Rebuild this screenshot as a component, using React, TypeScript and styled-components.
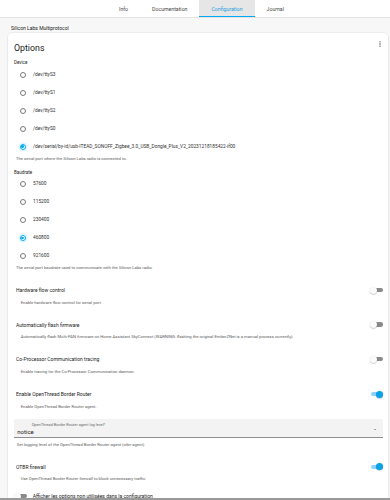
import React from "react";
import styled, { createGlobalStyle } from "styled-components";

const GlobalStyle = createGlobalStyle`
  html, body { margin: 0; padding: 0; background: #f7f7f7; }
  body {
    font-family: Roboto, "Noto Sans", "Liberation Sans", sans-serif;
    color: #212121;
  }
  * { box-sizing: border-box; }
`;

const Page = styled.div`
  width: 390px;
  height: 500px;
  overflow: hidden;
  display: flex;
  flex-direction: column;
  background: #f7f7f7;
`;

const TabBar = styled.nav`
  flex: none;
  height: 18px;
  background: #ffffff;
  border-bottom: 1px solid #e4e4e4;
  display: flex;
  padding-left: 107px;
`;

const Tab = styled.div<{ $active?: boolean }>`
  height: 17px;
  padding: 0 12px;
  display: flex;
  align-items: center;
  font-size: 5.2px;
  color: ${(p) => (p.$active ? "#1e9fe0" : "#4a4a4a")};
  background: ${(p) => (p.$active ? "#e6e6e6" : "transparent")};
  box-shadow: ${(p) => (p.$active ? "inset 0 -1px 0 #03a9f4" : "none")};
`;

const Content = styled.main`
  flex: 1;
  min-height: 0;
  overflow: hidden;
  padding: 7px 2px 0 8px;
  display: flex;
  flex-direction: column;
`;

const AddonName = styled.div`
  font-size: 5px;
  line-height: 6px;
  padding-left: 3px;
  margin-bottom: 2px;
  color: #212121;
`;

const Card = styled.section`
  background: #ffffff;
  border-radius: 4px 4px 0 0;
  box-shadow: 0 0 0 0.6px #e3e3e3, 0 1px 2px rgba(0, 0, 0, 0.06);
  padding: 10px 5px 0 6px;
  display: flex;
  flex-direction: column;
`;

const CardHeader = styled.header`
  display: flex;
  justify-content: space-between;
  align-items: flex-start;
`;

const CardTitle = styled.h1`
  margin: 0;
  font-size: 8.8px;
  line-height: 10px;
  font-weight: 400;
  color: #212121;
`;

const KebabButton = styled.div`
  margin-top: -2px;
  margin-right: 2px;
  width: 2px;
  height: 6px;
  display: flex;
`;

const GroupLabel = styled.div<{ $top: number }>`
  margin-top: ${(p) => p.$top}px;
  margin-bottom: 0.5px;
  font-size: 4.5px;
  line-height: 5px;
  color: #212121;
`;

const RadioList = styled.div`
  display: flex;
  flex-direction: column;
`;

const RadioRow = styled.label`
  height: 18px;
  display: flex;
  align-items: center;
  padding-left: 5.7px;
`;

const RadioCircle = styled.span<{ $checked?: boolean }>`
  flex: none;
  width: 6px;
  height: 6px;
  border-radius: 50%;
  border: 0.8px solid ${(p) => (p.$checked ? "#03a9f4" : "#7a7a7a")};
  display: flex;
  align-items: center;
  justify-content: center;
  box-shadow: ${(p) => (p.$checked ? "0 0 0 1.6px rgba(3,169,244,0.13)" : "none")};

  &::after {
    content: "";
    width: 2.6px;
    height: 2.6px;
    border-radius: 50%;
    background: ${(p) => (p.$checked ? "#03a9f4" : "transparent")};
  }
`;

const RadioText = styled.span`
  margin-left: 7.3px;
  font-size: 4.8px;
  line-height: 6px;
  color: #333333;
  white-space: nowrap;
`;

const Helper = styled.div<{ $indent: number; $top?: number }>`
  margin-top: ${(p) => p.$top ?? 0}px;
  padding-left: ${(p) => p.$indent}px;
  font-size: 4.2px;
  line-height: 5px;
  color: #5e5e5e;
  white-space: nowrap;
`;

const SwitchRow = styled.div<{ $top: number }>`
  margin-top: ${(p) => p.$top}px;
  height: 10px;
  display: flex;
  align-items: center;
  justify-content: space-between;
  padding-left: 2px;
`;

const SwitchLabel = styled.span`
  font-size: 5px;
  line-height: 6px;
  color: #212121;
`;

const Toggle = styled.span<{ $on?: boolean }>`
  position: relative;
  flex: none;
  width: 13px;
  height: 8px;
  display: block;

  &::before {
    content: "";
    position: absolute;
    left: 0.5px;
    right: 0;
    top: 1.8px;
    height: 4.4px;
    border-radius: 2.2px;
    background: ${(p) => (p.$on ? "#8dd3f7" : "#8a8a8a")};
  }

  &::after {
    content: "";
    position: absolute;
    top: 0.5px;
    left: ${(p) => (p.$on ? "6px" : "-0.5px")};
    width: 7px;
    height: 7px;
    border-radius: 50%;
    background: ${(p) => (p.$on ? "#0ba2ea" : "#fbfbfb")};
    box-shadow: 0 0.4px 1px rgba(0, 0, 0, 0.35);
  }
`;

const SelectField = styled.div`
  margin-top: 10px;
  height: 19.5px;
  background: #f3f3f3;
  border-radius: 1.5px 1.5px 0 0;
  border-bottom: 0.8px solid #8f8f8f;
  display: flex;
  align-items: flex-start;
  justify-content: space-between;
`;

const SelectBody = styled.div`
  display: flex;
  flex-direction: column;
  padding-top: 4px;
`;

const SelectLabel = styled.span`
  padding-left: 17.7px;
  font-size: 3.9px;
  line-height: 4px;
  color: #6a6a6a;
`;

const SelectValue = styled.span`
  margin-top: 1.5px;
  padding-left: 3.3px;
  font-size: 6px;
  line-height: 7px;
  color: #212121;
`;

const SelectArrow = styled.span`
  margin-top: 10px;
  margin-right: 7px;
  width: 0;
  height: 0;
  border-left: 1.3px solid transparent;
  border-right: 1.3px solid transparent;
  border-top: 1.4px solid #555;
`;

const UnusedRow = styled.div`
  margin-top: 11px;
  height: 8px;
  display: flex;
  align-items: center;
  gap: 5.7px;
`;

const BottomEdge = styled.div`
  flex: none;
  height: 2px;
  background: #9a9a9a;
`;

const devices = [
  "/dev/ttyS3",
  "/dev/ttyS1",
  "/dev/ttyS2",
  "/dev/ttyS0",
  "/dev/serial/by-id/usb-ITEAD_SONOFF_Zigbee_3.0_USB_Dongle_Plus_V2_20231218185422-if00",
];
const bauds = ["57600", "115200", "230400", "460800", "921600"];

const Kebab = () => (
  <KebabButton>
    <svg width="2" height="6" viewBox="0 0 2 6">
      <circle cx="1" cy="0.8" r="0.65" fill="#444" />
      <circle cx="1" cy="3" r="0.65" fill="#444" />
      <circle cx="1" cy="5.2" r="0.65" fill="#444" />
    </svg>
  </KebabButton>
);

const RadioGroup = ({ items, selected }: { items: string[]; selected: string }) => (
  <RadioList>
    {items.map((it) => (
      <RadioRow key={it}>
        <RadioCircle $checked={it === selected} />
        <RadioText>{it}</RadioText>
      </RadioRow>
    ))}
  </RadioList>
);

const SwitchBlock = ({
  label,
  helper,
  on,
  top,
}: {
  label: string;
  helper: string;
  on?: boolean;
  top: number;
}) => (
  <>
    <SwitchRow $top={top}>
      <SwitchLabel>{label}</SwitchLabel>
      <Toggle $on={on} />
    </SwitchRow>
    <Helper $indent={6.7} $top={4.5}>
      {helper}
    </Helper>
  </>
);

export default function App() {
  return (
    <Page>
      <GlobalStyle />
      <TabBar>
        <Tab>Info</Tab>
        <Tab>Documentation</Tab>
        <Tab $active>Configuration</Tab>
        <Tab>Journal</Tab>
      </TabBar>
      <Content>
        <AddonName>Silicon Labs Multiprotocol</AddonName>
        <Card>
          <CardHeader>
            <CardTitle>Options</CardTitle>
            <Kebab />
          </CardHeader>

          <GroupLabel $top={7}>Device</GroupLabel>
          <RadioGroup items={devices} selected={devices[4]} />
          <Helper $indent={2}>The serial port where the Silicon Labs radio is connected to.</Helper>

          <GroupLabel $top={9}>Baudrate</GroupLabel>
          <RadioGroup items={bauds} selected="460800" />
          <Helper $indent={2}>The serial port baudrate used to communicate with the Silicon Labs radio.</Helper>

          <SwitchBlock
            top={15}
            label="Hardware flow control"
            helper="Enable hardware flow control for serial port."
          />
          <SwitchBlock
            top={15}
            label="Automatically flash firmware"
            helper="Automatically flash Multi-PAN firmware on Home Assistant SkyConnect (WARNING: flashing the original EmberZNet is a manual process currently)."
          />
          <SwitchBlock
            top={15.3}
            label="Co-Processor Communication tracing"
            helper="Enable tracing for the Co-Processor Communication daemon."
          />
          <SwitchBlock
            top={15.5}
            on
            label="Enable OpenThread Border Router"
            helper="Enable OpenThread Border Router agent."
          />

          <SelectField>
            <SelectBody>
              <SelectLabel>OpenThread Border Router agent log level*</SelectLabel>
              <SelectValue>notice</SelectValue>
            </SelectBody>
            <SelectArrow />
          </SelectField>
          <Helper $indent={2.7} $top={3.5}>
            Set logging level of the OpenThread Border Router agent (otbr-agent).
          </Helper>

          <SwitchBlock
            top={15}
            on
            label="OTBR firewall"
            helper="Use OpenThread Border Router firewall to block unnecessary traffic."
          />

          <UnusedRow>
            <Toggle />
            <SwitchLabel>Afficher les options non utilisées dans la configuration</SwitchLabel>
          </UnusedRow>
        </Card>
      </Content>
      <BottomEdge />
    </Page>
  );
}
